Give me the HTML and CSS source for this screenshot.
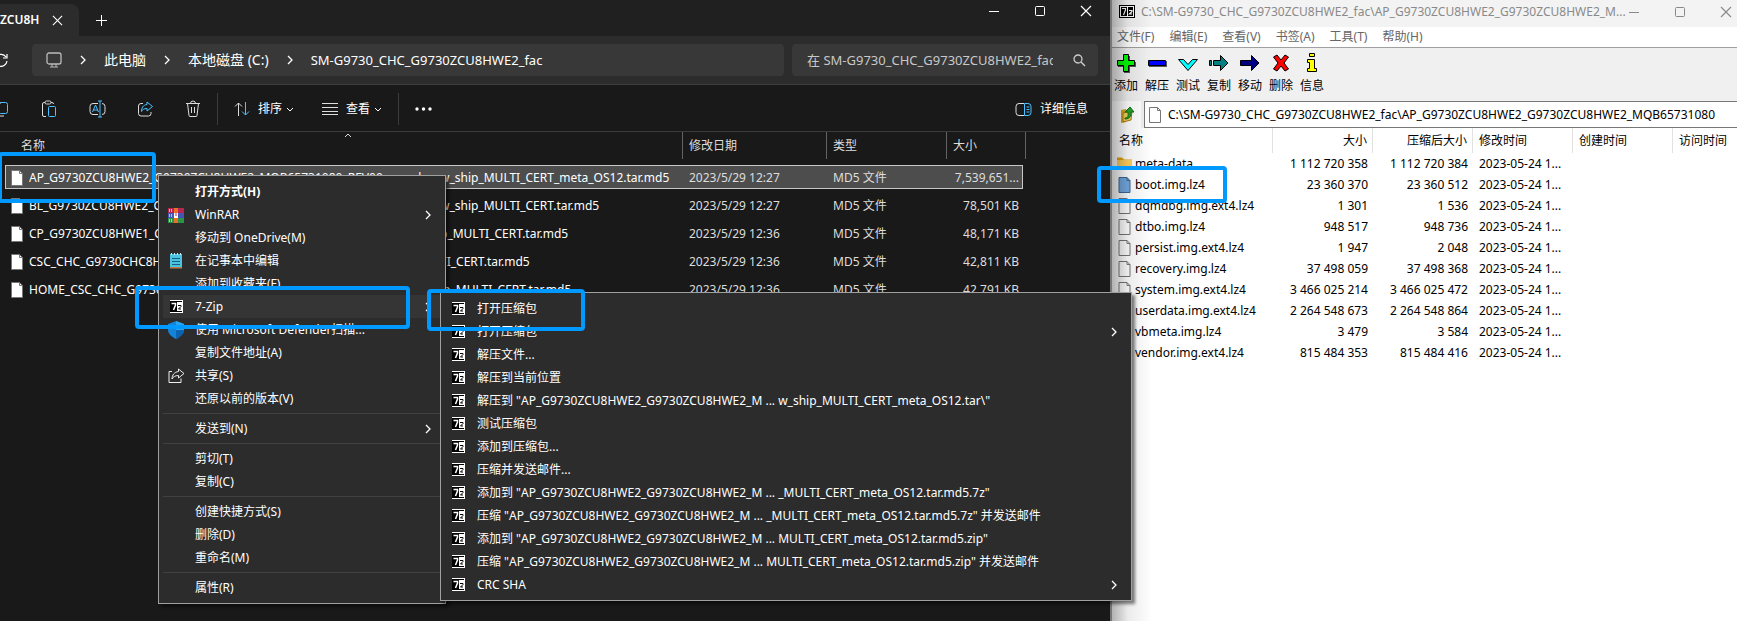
FILE: index.html
```html
<!DOCTYPE html>
<html lang="zh-CN">
<head>
  <meta charset="UTF-8">
  <meta name="viewport" content="width=device-width, initial-scale=1.0">
  <title>SM-G9730_CHC_G9730ZCU8HWE2_fac</title>
  <link rel="stylesheet" href="styles.css">
</head>
<body>
  <!-- shared icons -->
  <svg class="sprite" aria-hidden="true">
    <symbol id="i-7z" viewBox="0 0 13 13">
      <rect width="13" height="13" fill="#fff"/>
      <rect y="1" width="12" height="11" fill="#000"/>
      <rect x="7" y="2" width="5" height="9" fill="#fff"/>
      <path d="M1.500 3.500h4v1.500L3.500 10" fill="none" stroke="#fff" stroke-width="1.500"/>
      <path d="M8 5.500h3v1L8.500 9h2.500" fill="none" stroke="#000"/>
    </symbol>
    <symbol id="i-file" viewBox="0 0 12 16">
      <path d="M.5.5h8l3 3v12H.5z" fill="#fff" stroke="#777"/>
      <path d="M8.500.5v3h3" fill="none" stroke="#777"/>
    </symbol>
    <symbol id="i-chev" viewBox="0 0 6 10">
      <path d="M1 1l4 4-4 4" fill="none" stroke="currentColor" stroke-width="1.300"/>
    </symbol>
    <symbol id="i-down" viewBox="0 0 8 5">
      <path d="M1 1l3 3 3-3" fill="none" stroke="currentColor"/>
    </symbol>
    <symbol id="i-x" viewBox="0 0 12 12">
      <path d="M1 1l10 10M11 1L1 11" stroke="currentColor" stroke-width="1.200"/>
    </symbol>
    <symbol id="i-max" viewBox="0 0 12 12">
      <rect x="1.500" y="1.500" width="9" height="9" rx="1" fill="none" stroke="currentColor"/>
    </symbol>
    <symbol id="i-min" viewBox="0 0 12 12">
      <path d="M1 6.500h10" stroke="currentColor"/>
    </symbol>
  </svg>

  <main class="desktop">
    <section class="explorer">
      <header class="tabs">
        <div class="tab">
          <span>ZCU8H</span>
          <button aria-label="关闭标签页"><svg width="11" height="11"><use href="#i-x"/></svg></button>
        </div>
        <button class="new-tab" aria-label="新建标签页"><svg width="11" height="11" viewBox="0 0 11 11"><path d="M5.500 0v11M0 5.500h11" stroke="currentColor"/></svg></button>
        <div class="win-controls">
          <button aria-label="最小化"><svg width="12" height="12"><use href="#i-min"/></svg></button>
          <button aria-label="最大化"><svg width="12" height="12"><use href="#i-max"/></svg></button>
          <button aria-label="关闭"><svg width="12" height="12"><use href="#i-x"/></svg></button>
        </div>
      </header>

      <div class="nav">
        <button class="refresh" aria-label="刷新"><svg width="14" height="14" viewBox="0 0 14 14"><path d="M12 4A6 6 0 1 0 13 8M13 1v4H9" fill="none" stroke="currentColor" stroke-width="1.200"/></svg></button>
        <nav class="crumbs">
          <svg width="16" height="16" viewBox="0 0 16 16" fill="none" stroke="#bbb"><rect x="1" y="1" width="14" height="11" rx="2" stroke-width="1.300"/><path d="M6 12v3M10 12v3M4 15h8"/></svg>
          <svg width="6" height="10"><use href="#i-chev"/></svg>
          <a href="#">此电脑</a>
          <svg width="6" height="10"><use href="#i-chev"/></svg>
          <a href="#">本地磁盘 (C:)</a>
          <svg width="6" height="10"><use href="#i-chev"/></svg>
          <a href="#" class="current">SM-G9730_CHC_G9730ZCU8HWE2_fac</a>
        </nav>
        <label class="search">
          <input type="text" aria-label="搜索" placeholder="在 SM-G9730_CHC_G9730ZCU8HWE2_fac 中搜索">
          <svg width="13" height="13" viewBox="0 0 13 13" fill="none" stroke="#ccc"><circle cx="5" cy="5" r="4" stroke-width="1.300"/><path d="M8 8l4 4" stroke-width="1.500"/></svg>
        </label>
      </div>

      <div class="commands">
        <button class="icon copy" aria-label="复制"><svg width="16" height="16" viewBox="0 0 16 16" fill="none"><path d="M5 12H3V2h6" stroke="#ddd"/><rect x="6.500" y="1.500" width="9" height="11" rx="2" stroke="#4cc2ff"/><path d="M6 15h6" stroke="#ddd"/></svg></button>
        <button class="icon" aria-label="粘贴"><svg width="16" height="18" viewBox="0 0 16 18" fill="none"><path d="M5 16.500H3a1.500 1.500 0 0 1-1.500-1.500V4A1.500 1.500 0 0 1 3 2.500h1M10 2.500h1A1.500 1.500 0 0 1 12.500 4" stroke="#ddd"/><rect x="4" y="1" width="6" height="3" rx="1.500" stroke="#ddd"/><rect x="7.500" y="6.500" width="7" height="10" rx="1" stroke="#4cc2ff"/></svg></button>
        <button class="icon" aria-label="重命名"><svg width="17" height="18" viewBox="0 0 17 18" fill="none"><path d="M9 3.500H4A3 3 0 0 0 1 6.500v5a3 3 0 0 0 3 3h5M13 3.500a3 3 0 0 1 3 3v5a3 3 0 0 1-3 3" stroke="#ddd"/><path d="M11 1v16M9 1h4M9 17h4M3.500 12l3-7 3 7M4.500 10h4" stroke="#4cc2ff"/></svg></button>
        <button class="icon" aria-label="共享"><svg width="17" height="18" viewBox="0 0 17 18" fill="none"><path d="M6 3.500H4a2.500 2.500 0 0 0-2.500 2.500v7.500A2.500 2.500 0 0 0 4 16h7.500a2.500 2.500 0 0 0 2.500-2.500V12" stroke="#ddd"/><path d="M10 2l5.500 4.500L10 11V8.500c-3 0-4.500 1-5.500 3C4.500 8 6 5 10 4.500z" stroke="#4cc2ff"/></svg></button>
        <button class="icon" aria-label="删除"><svg width="16" height="18" viewBox="0 0 16 18" fill="none" stroke="#ddd"><path d="M1 3.500h14M5.500 3.500a2.500 2.500 0 0 1 5 0M2.500 3.500l1.500 12a1 1 0 0 0 1 1h6a1 1 0 0 0 1-1l1.500-12M6.500 7v6M9.500 7v6"/></svg></button>
        <i class="bar"></i>
        <button class="sort"><svg width="16" height="14" viewBox="0 0 16 14" fill="none"><path d="M4.500 14V1M1 4.500L4.500 1 8 4.500" stroke="#ddd"/><path d="M11.500 0v13M8 9.500l3.500 3.500L15 9.500" stroke="#4cc2ff"/></svg><span>排序</span><svg width="8" height="5"><use href="#i-down"/></svg></button>
        <button class="view"><svg width="16" height="12" viewBox="0 0 16 12" stroke="#ddd"><path d="M0 .5h16M0 4.500h16M0 8.500h16M0 11.500h16"/></svg><span>查看</span><svg width="8" height="5"><use href="#i-down"/></svg></button>
        <i class="bar"></i>
        <button class="more" aria-label="更多"><svg width="17" height="4" viewBox="0 0 17 4" fill="#fff"><circle cx="2" cy="2" r="1.700"/><circle cx="8.500" cy="2" r="1.700"/><circle cx="15" cy="2" r="1.700"/></svg></button>
        <button class="details"><svg width="17" height="13" viewBox="0 0 17 13" fill="none"><path d="M9 .5H4A3 3 0 0 0 1 3.500v6a3 3 0 0 0 3 3h5" stroke="#ddd"/><path d="M9.500.5H13a3 3 0 0 1 3 3v6a3 3 0 0 1-3 3H9.500zM11.500 4h3M11.500 6.500h3M11.500 9h3" stroke="#4cc2ff"/></svg>详细信息</button>
      </div>

      <table class="files">
        <thead>
          <tr><th>名称<svg class="sorted" width="8" height="5"><use href="#i-down"/></svg></th><th>修改日期</th><th>类型</th><th>大小</th></tr>
        </thead>
        <tbody>
          <tr class="selected"><td><div class="name"><svg width="12" height="16"><use href="#i-file"/></svg><span class="head">AP_G9730ZCU8HWE2_G9730ZCU8HWE2_MQB65731080_REV00_user_lo</span><span>w_ship_MULTI_CERT_meta_OS12.tar.md5</span></div></td><td>2023/5/29 12:27</td><td>MD5 文件</td><td>7,539,651...</td></tr>
          <tr><td><div class="name"><svg width="12" height="16"><use href="#i-file"/></svg><span class="head">BL_G9730ZCU8HWE2_G9730ZCU8HWE2_MQB65731080_REV00_user_lo</span><span>w_ship_MULTI_CERT.tar.md5</span></div></td><td>2023/5/29 12:27</td><td>MD5 文件</td><td>78,501 KB</td></tr>
          <tr><td><div class="name"><svg width="12" height="16"><use href="#i-file"/></svg><span class="head">CP_G9730ZCU8HWE1_CP15973562_CL17639205_QB3965_REV00_user</span><span>p_MULTI_CERT.tar.md5</span></div></td><td>2023/5/29 12:36</td><td>MD5 文件</td><td>48,171 KB</td></tr>
          <tr><td><div class="name"><svg width="12" height="16"><use href="#i-file"/></svg><span class="head">CSC_CHC_G9730CHC8HWE1_MQB65731080_REV00_user_low_ship_MUL</span><span>TI_CERT.tar.md5</span></div></td><td>2023/5/29 12:36</td><td>MD5 文件</td><td>42,811 KB</td></tr>
          <tr><td><div class="name"><svg width="12" height="16"><use href="#i-file"/></svg><span class="head">HOME_CSC_CHC_G9730CHC8HWE1_MQB65731080_REV00_user_low_sh</span><span>ip_MULTI_CERT.tar.md5</span></div></td><td>2023/5/29 12:36</td><td>MD5 文件</td><td>42,791 KB</td></tr>
        </tbody>
      </table>
    </section>

    <section class="sevenzip">
      <header class="title">
        <svg width="16" height="13" viewBox="0 0 16 13"><rect x=".5" y=".5" width="15" height="12" fill="#fff" stroke="#000"/><path d="M2 2h6v9H2zM9 2h5v9H9z"/><path d="M3 3.500h3.500v1.500L4.500 10M10 5.500h3v1L10.500 9H13" fill="none" stroke="#fff" stroke-width="1.200"/></svg>
        <h1>C:\SM-G9730_CHC_G9730ZCU8HWE2_fac\AP_G9730ZCU8HWE2_G9730ZCU8HWE2_M...</h1>
        <div class="win-controls">
          <button aria-label="最小化"><svg width="12" height="12"><use href="#i-min"/></svg></button>
          <button aria-label="最大化"><svg width="12" height="12"><use href="#i-max"/></svg></button>
          <button aria-label="关闭"><svg width="12" height="12"><use href="#i-x"/></svg></button>
        </div>
      </header>
      <nav class="menubar">
        <button>文件(F)</button><button>编辑(E)</button><button>查看(V)</button><button>书签(A)</button><button>工具(T)</button><button>帮助(H)</button>
      </nav>
      <div class="tools">
        <button><svg width="24" height="22" viewBox="0 0 24 22"><path d="M10 4h6v6h6v5h-6v6h-6v-6H4v-5h6z" fill="#555"/><path d="M9.500 2.500h5v6h6v5h-6v6h-5v-6h-6v-5h6z" fill="#0f0" stroke="#000"/></svg>添加</button>
        <button><svg width="24" height="22" viewBox="0 0 24 22"><path d="M4 9h18v6H4z" fill="#555"/><path d="M3.500 8.500h17v5h-17z" fill="#00f" stroke="#000"/></svg>解压</button>
        <button><svg width="24" height="22" viewBox="0 0 24 22"><path d="M2.500 7.500h5l4.500 5 4.500-5h5l-9.500 11z" fill="#0ff" stroke="#000"/></svg>测试</button>
        <button><svg width="24" height="22" viewBox="0 0 24 22"><path d="M2.500 8.500h2v5h-2zM6.500 8.500h7v-5l7.500 7.500-7.500 7.500v-5h-7z" fill="#008080" stroke="#000"/></svg>复制</button>
        <button><svg width="24" height="22" viewBox="0 0 24 22"><path d="M2.500 8.500h11v-5l7.500 7.500-7.500 7.500v-5h-11z" fill="#000080" stroke="#000"/></svg>移动</button>
        <button><svg width="24" height="22" viewBox="0 0 24 22"><path d="M4.500 5l3.500-2 4 5 4-5 3.500 2-4.500 6 4.500 6-3.500 2-4-5-4 5-3.500-2L9 11z" fill="#f00" stroke="#000"/></svg>删除</button>
        <button><svg width="24" height="22" viewBox="0 0 24 22"><path d="M9.500 1.500h5v3h-5zM7.500 7.500h7v9h2v3h-9v-3h2v-6h-2z" fill="#ff0" stroke="#000"/></svg>信息</button>
      </div>
      <div class="address">
        <button class="up" aria-label="上一级"><svg width="16" height="18" viewBox="0 0 16 18"><path d="M2 4l5-1v13l-5 1z" fill="#d9a520"/><path d="M4 7l9-2-1 9-8 2z" fill="#f5d35c" stroke="#a87c10"/><path d="M6 12c4 0 3-4 3-6H6l5-5 4 5h-3c0 4-1 7-6 7z" fill="#27a32b" stroke="#136d17"/></svg></button>
        <label class="path">
          <svg width="12" height="16"><use href="#i-file"/></svg>
          <input type="text" aria-label="路径" value="C:\SM-G9730_CHC_G9730ZCU8HWE2_fac\AP_G9730ZCU8HWE2_G9730ZCU8HWE2_MQB65731080">
        </label>
      </div>
      <table class="entries">
        <thead>
          <tr><th>名称</th><th>大小</th><th>压缩后大小</th><th>修改时间</th><th>创建时间</th><th>访问时间</th></tr>
        </thead>
        <tbody>
          <tr><td><div class="name"><svg width="15" height="15" viewBox="0 0 15 15"><path d="M0 1.500h5l2 2h8V14H0z" fill="#e5a50a"/><path d="M0 4h15v10H0z" fill="#ffd060"/></svg>meta-data</div></td><td>1 112 720 358</td><td>1 112 720 384</td><td>2023-05-24 1...</td><td></td><td></td></tr>
          <tr><td><div class="name"><svg width="12" height="16" viewBox="0 0 12 16"><path d="M.5.5h8l3 3v12H.5z" fill="#74a9e0" stroke="#3c6796"/><path d="M8.500.5v3h3" fill="none" stroke="#3c6796"/></svg>boot.img.lz4</div></td><td>23 360 370</td><td>23 360 512</td><td>2023-05-24 1...</td><td></td><td></td></tr>
          <tr><td><div class="name"><svg width="12" height="16"><use href="#i-file"/></svg>dqmdbg.img.ext4.lz4</div></td><td>1 301</td><td>1 536</td><td>2023-05-24 1...</td><td></td><td></td></tr>
          <tr><td><div class="name"><svg width="12" height="16"><use href="#i-file"/></svg>dtbo.img.lz4</div></td><td>948 517</td><td>948 736</td><td>2023-05-24 1...</td><td></td><td></td></tr>
          <tr><td><div class="name"><svg width="12" height="16"><use href="#i-file"/></svg>persist.img.ext4.lz4</div></td><td>1 947</td><td>2 048</td><td>2023-05-24 1...</td><td></td><td></td></tr>
          <tr><td><div class="name"><svg width="12" height="16"><use href="#i-file"/></svg>recovery.img.lz4</div></td><td>37 498 059</td><td>37 498 368</td><td>2023-05-24 1...</td><td></td><td></td></tr>
          <tr><td><div class="name"><svg width="12" height="16"><use href="#i-file"/></svg>system.img.ext4.lz4</div></td><td>3 466 025 214</td><td>3 466 025 472</td><td>2023-05-24 1...</td><td></td><td></td></tr>
          <tr><td><div class="name"><svg width="12" height="16"><use href="#i-file"/></svg>userdata.img.ext4.lz4</div></td><td>2 264 548 673</td><td>2 264 548 864</td><td>2023-05-24 1...</td><td></td><td></td></tr>
          <tr><td><div class="name"><svg width="12" height="16"><use href="#i-file"/></svg>vbmeta.img.lz4</div></td><td>3 479</td><td>3 584</td><td>2023-05-24 1...</td><td></td><td></td></tr>
          <tr><td><div class="name"><svg width="12" height="16"><use href="#i-file"/></svg>vendor.img.ext4.lz4</div></td><td>815 484 353</td><td>815 484 416</td><td>2023-05-24 1...</td><td></td><td></td></tr>
        </tbody>
      </table>
    </section>

    <!-- context menu -->
    <div class="menu context">
      <button class="default"><i></i>打开方式(H)</button>
      <button><i><svg width="16" height="16" viewBox="0 0 16 16"><path d="M0 1h16v5H0z" fill="#b8264f"/><path d="M0 6h16v5H0z" fill="#4455b5"/><path d="M0 11h16v5H0z" fill="#2b9348"/><path d="M6 1h4v15H6z" fill="#e8702a"/><path d="M6 6h4v5H6z" fill="#fff"/><path d="M8 6v3" stroke="#b8264f"/><path d="M1.500 2v3M3.500 2v3M1.500 7v3M3.500 7v3M1.500 12v3M3.500 12v3" stroke="#f0c030"/></svg></i>WinRAR<svg class="arrow" width="6" height="10"><use href="#i-chev"/></svg></button>
      <button><i></i>移动到 OneDrive(M)</button>
      <button><i><svg width="12" height="16" viewBox="0 0 12 16"><path d="M0 1h12v14H0z" fill="#4cc3e0"/><path d="M0 14h12v1.500H0z" fill="#c07b4a"/><path d="M1.500 0v2M4.500 0v2M7.500 0v2M10.500 0v2" stroke="#bfefff"/><path d="M2 5.500h8M2 8.500h8M2 11.500h8" stroke="#17607c"/></svg></i>在记事本中编辑</button>
      <button><i></i>添加到收藏夹(F)</button>
      <button class="active"><i><svg width="13" height="13"><use href="#i-7z"/></svg></i>7-Zip<svg class="arrow" width="6" height="10"><use href="#i-chev"/></svg></button>
      <button><i><svg width="16" height="18" viewBox="0 0 16 18"><path d="M8 0l8 3v6c0 4-4 7-8 9-4-2-8-5-8-9V3z" fill="#1583d8"/><path d="M8 0l8 3v6H8z" fill="#2aa5f0"/><path d="M8 9h8c0 4-4 7-8 9z" fill="#0b62b0"/></svg></i>使用 Microsoft Defender扫描...</button>
      <button><i></i>复制文件地址(A)</button>
      <button><i><svg width="17" height="15" viewBox="0 0 17 15" fill="none" stroke="#eee"><path d="M4 3.500H1v11h12v-4"/><path d="M10.500 1l5.500 4.500-5.500 4.500V7.500C7 7.500 5 9 4 11c0-4 2.500-7 6.500-7.500z"/></svg></i>共享(S)</button>
      <button><i></i>还原以前的版本(V)</button>
      <hr>
      <button><i></i>发送到(N)<svg class="arrow" width="6" height="10"><use href="#i-chev"/></svg></button>
      <hr>
      <button><i></i>剪切(T)</button>
      <button><i></i>复制(C)</button>
      <hr>
      <button><i></i>创建快捷方式(S)</button>
      <button><i></i>删除(D)</button>
      <button><i></i>重命名(M)</button>
      <hr>
      <button><i></i>属性(R)</button>
    </div>

    <div class="menu submenu">
      <button><i><svg width="13" height="13"><use href="#i-7z"/></svg></i>打开压缩包</button>
      <button><i><svg width="13" height="13"><use href="#i-7z"/></svg></i>打开压缩包<svg class="arrow" width="6" height="10"><use href="#i-chev"/></svg></button>
      <button><i><svg width="13" height="13"><use href="#i-7z"/></svg></i>解压文件...</button>
      <button><i><svg width="13" height="13"><use href="#i-7z"/></svg></i>解压到当前位置</button>
      <button><i><svg width="13" height="13"><use href="#i-7z"/></svg></i>解压到 "AP_G9730ZCU8HWE2_G9730ZCU8HWE2_M ... w_ship_MULTI_CERT_meta_OS12.tar\"</button>
      <button><i><svg width="13" height="13"><use href="#i-7z"/></svg></i>测试压缩包</button>
      <button><i><svg width="13" height="13"><use href="#i-7z"/></svg></i>添加到压缩包...</button>
      <button><i><svg width="13" height="13"><use href="#i-7z"/></svg></i>压缩并发送邮件...</button>
      <button><i><svg width="13" height="13"><use href="#i-7z"/></svg></i>添加到 "AP_G9730ZCU8HWE2_G9730ZCU8HWE2_M ... _MULTI_CERT_meta_OS12.tar.md5.7z"</button>
      <button><i><svg width="13" height="13"><use href="#i-7z"/></svg></i>压缩 "AP_G9730ZCU8HWE2_G9730ZCU8HWE2_M ... _MULTI_CERT_meta_OS12.tar.md5.7z" 并发送邮件</button>
      <button><i><svg width="13" height="13"><use href="#i-7z"/></svg></i>添加到 "AP_G9730ZCU8HWE2_G9730ZCU8HWE2_M ... MULTI_CERT_meta_OS12.tar.md5.zip"</button>
      <button><i><svg width="13" height="13"><use href="#i-7z"/></svg></i>压缩 "AP_G9730ZCU8HWE2_G9730ZCU8HWE2_M ... MULTI_CERT_meta_OS12.tar.md5.zip" 并发送邮件</button>
      <button><i><svg width="13" height="13"><use href="#i-7z"/></svg></i>CRC SHA<svg class="arrow" width="6" height="10"><use href="#i-chev"/></svg></button>
    </div>

    <!-- highlights -->
    <div class="mark mark-file"></div>
    <div class="mark mark-menu"></div>
    <div class="mark mark-open"></div>
    <div class="mark mark-boot"></div>
  </main>
</body>
</html>
```
FILE: styles.css
```css
* {
  box-sizing: border-box;
}
body {
  margin: 0;
  font-family: "Noto Sans", "Noto Sans CJK SC", sans-serif;
  font-size: 12px;
  line-height: 16px;
  background: #191919;
}
button {
  display: flex;
  align-items: center;
  padding: 0;
  border: 0;
  background: none;
  color: inherit;
  font: inherit;
  white-space: nowrap;
}
input {
  min-width: 0;
  padding: 0;
  border: 0;
  outline: 0;
  background: none;
  color: inherit;
  font: inherit;
}
a {
  color: inherit;
  text-decoration: none;
}
svg {
  display: block;
  flex: none;
}
.sprite {
  position: absolute;
  width: 0;
  height: 0;
}
.desktop {
  position: relative;
  display: grid;
  grid-template-columns: minmax(0, 1112fr) minmax(0, 625fr);
  min-height: 100vh;
  overflow: hidden;
}

/* explorer window */
.explorer {
  background: #191919;
  color: #fff;
  border-right: 2px solid #777;
}
.tabs {
  display: flex;
  align-items: flex-end;
  height: 36px;
  background: #202020;
}
.tab {
  display: flex;
  align-items: center;
  justify-content: space-between;
  width: 79px;
  height: 32px;
  padding-right: 16px;
  border-radius: 0 8px 0 0;
  background: #2c2c2c;
  font-weight: 600;
}
.new-tab {
  height: 32px;
  margin-left: 17px;
}
.win-controls {
  display: flex;
  align-items: center;
  gap: 34px;
  margin-left: auto;
}
.tabs .win-controls {
  align-self: flex-start;
  height: 22px;
  margin-right: 18px;
}
.nav {
  display: flex;
  align-items: center;
  gap: 8px;
  height: 49px;
  padding-right: 12px;
  border-bottom: 1px solid #3d3d3d;
  background: #2c2c2c;
  font-size: 14px;
  line-height: 20px;
}
.refresh {
  width: 24px;
  margin-left: -6px;
  margin-right: 6px;
}
.crumbs {
  display: flex;
  flex: 1;
  align-items: center;
  gap: 18px;
  height: 32px;
  padding: 0 14px;
  border-radius: 4px;
  background: #383838;
  white-space: nowrap;
}
.crumbs .current {
  font-size: 13px;
}
.search {
  display: flex;
  align-items: center;
  gap: 20px;
  width: 306px;
  height: 32px;
  padding: 0 12px 0 15px;
  border-radius: 4px;
  background: #383838;
  font-size: 13px;
}
.search input {
  flex: 1;
}
.search input::placeholder {
  color: #c8c8c8;
  opacity: 1;
}
.commands {
  display: flex;
  align-items: center;
  height: 47px;
  padding: 2px 22px 0 0;
  border-bottom: 1px solid #3a3a3a;
}
.commands .icon {
  justify-content: center;
  width: 48px;
}
.commands .copy {
  width: 33px;
  margin-left: -8px;
  justify-content: flex-start;
}
.bar {
  width: 1px;
  height: 32px;
  background: #3a3a3a;
}
.sort, .view {
  gap: 4px;
}
.sort span, .view span {
  padding-left: 4px;
}
.sort {
  margin-left: 16px;
}
.view {
  margin: 0 16px 0 28px;
}
.more {
  margin-left: 16px;
}
.details {
  gap: 8px;
  margin-left: auto;
}

.files {
  width: calc(100% - 92px);
  margin: -4px 0 0 5px;
  border-spacing: 0 4px;
  table-layout: fixed;
}
.files th {
  position: relative;
  height: 29px;
  padding: 0 0 2px 6px;
  color: #ddd;
  font-weight: 400;
  text-align: left;
}
.files th::after {
  content: "";
  position: absolute;
  top: 0;
  right: 0;
  width: 1px;
  height: 27px;
  background: #636363;
}
.files th:first-child {
  padding-left: 16px;
}
.files th:nth-child(2) {
  width: 144px;
}
.files th:nth-child(3) {
  width: 120px;
}
.files th:nth-child(4) {
  width: 76px;
}
.files th:last-child::after {
  right: -3px;
}
.sorted {
  position: absolute;
  top: 1px;
  left: 50%;
  transform: rotate(180deg);
}
.files td {
  height: 24px;
  padding: 2px 0 0 6px;
  border: solid transparent;
  border-width: 1px 0;
  color: #ddd;
  white-space: nowrap;
}
.files td:first-child {
  padding-left: 5px;
  border-left-width: 1px;
  color: #fff;
}
.files td:last-child {
  padding: 2px 3px 0 0;
  border-right-width: 1px;
  text-align: right;
}
.files .selected td {
  background: #4d4d4d;
  border-color: #c8c8c8;
}
.name {
  display: flex;
  align-items: center;
}
.files .name svg {
  margin-right: 6px;
}
.head {
  flex: 0 0 411px;
  overflow: hidden;
}

/* 7-zip window */
.sevenzip {
  position: relative;
  min-width: 0;
  overflow: hidden;
  background: #fff;
  color: #000;
}
/* shadow cast by the explorer window */
.sevenzip::before {
  content: "";
  position: absolute;
  inset: 0 auto 0 0;
  width: 40px;
  background: linear-gradient(90deg, rgba(0, 0, 0, .3), rgba(0, 0, 0, .08) 40%, transparent);
  pointer-events: none;
}
.title {
  display: flex;
  align-items: center;
  gap: 6px;
  height: 27px;
  padding: 0 5px 4px 7px;
  background: #f3f3f3;
  color: #8a8a8a;
}
.title h1 {
  flex: 1;
  min-width: 0;
  margin: 0;
  font-size: 12px;
  font-weight: 400;
  white-space: nowrap;
}
.menubar {
  display: flex;
  gap: 15px;
  height: 20px;
  padding-left: 5px;
  color: #666;
}
.tools {
  display: flex;
  gap: 7px;
  height: 54px;
  padding: 4px 0 0 2px;
  border-top: 1px solid #a0a0a0;
  background: #f0f0f0;
}
.tools button {
  flex-direction: column;
  align-self: flex-start;
  gap: 4px;
}
.address {
  display: flex;
  height: 27px;
  background: #f0f0f0;
}
.up {
  justify-content: center;
  width: 29px;
  margin-right: 3px;
  background: #fff;
}
.path {
  display: flex;
  flex: 1;
  align-items: center;
  gap: 7px;
  padding: 0 8px 0 4px;
  border: solid #777;
  border-width: 1px 0 1px 1px;
  background: #fff;
}
.path input {
  flex: 1;
}
.entries {
  width: 100%;
  border-spacing: 0;
  table-layout: fixed;
}
.entries th {
  width: 100px;
  height: 25px;
  padding: 0 5px 0 6px;
  border-right: 1px solid #e2e2e2;
  font-weight: 400;
  text-align: left;
}
.entries th:first-child {
  width: 161px;
  padding-left: 7px;
}
.entries th:last-child {
  width: auto;
  border: 0;
}
.entries td {
  height: 21px;
  padding: 0 5px 0 6px;
  white-space: nowrap;
}
.entries td:first-child {
  padding-left: 5px;
}
.entries .name svg {
  width: 15px;
  margin-right: 3px;
}
.entries th:nth-child(2), .entries th:nth-child(3),
.entries td:nth-child(2), .entries td:nth-child(3) {
  text-align: right;
}

/* menus lie over both windows */
.menu {
  position: absolute;
  padding: 4px;
  border: 1px solid #a0a0a0;
  background: #2c2c2c;
  color: #fff;
  box-shadow: 3px 3px 3px rgba(0, 0, 0, .5);
}
.menu button {
  width: 100%;
  height: 23px;
  padding-right: 10px;
}
.menu i {
  display: flex;
  justify-content: center;
  width: 26px;
  margin-right: 6px;
}
.menu .default {
  font-weight: 700;
}
.menu .active {
  background: #353535;
}
.menu hr {
  height: 1px;
  margin: 3px 0;
  border: 0;
  background: #414141;
}
.arrow {
  margin-left: auto;
}
.context {
  top: 175px;
  left: 158px;
  width: 288px;
}
.submenu {
  top: 292px;
  left: 440px;
  width: 692px;
}

.mark {
  position: absolute;
  border: 4px solid #0099ff;
  border-radius: 4px;
  pointer-events: none;
}
.mark-file {
  top: 152px;
  left: -2px;
  width: 158px;
  height: 51px;
}
.mark-menu {
  top: 286px;
  left: 135px;
  width: 275px;
  height: 43px;
}
.mark-open {
  top: 289px;
  left: 427px;
  width: 158px;
  height: 42px;
}
.mark-boot {
  top: 166px;
  left: 1097px;
  width: 130px;
  height: 37px;
}
```
